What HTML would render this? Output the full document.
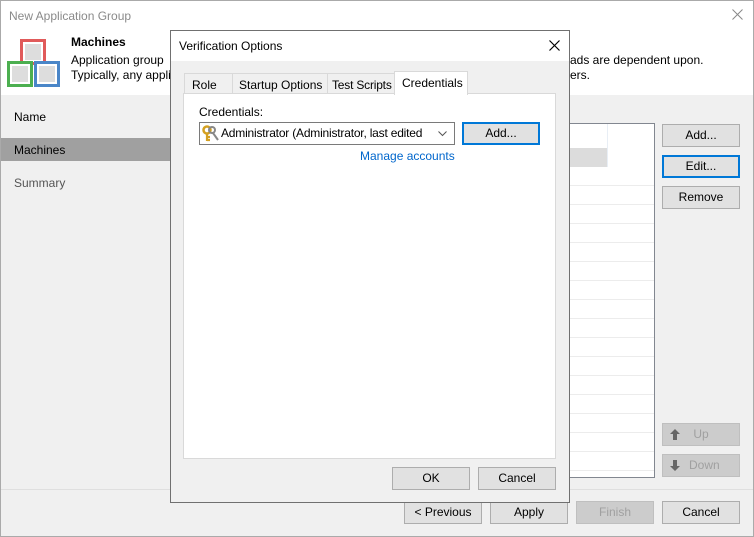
<!DOCTYPE html>
<html><head><style>
*{margin:0;padding:0;box-sizing:border-box}
body{width:754px;height:537px;overflow:hidden;font-family:"Liberation Sans",sans-serif;font-size:12px;color:#000;background:#f0f0f0;position:relative;white-space:nowrap}
.a{position:absolute}
.btn{position:absolute;background:#e1e1e1;border:1px solid #adadad;text-align:center;line-height:20px;font-size:12px}
.dis{background:#cccccc;border-color:#bfbfbf;color:#a0a0a0}
.foc{border:2px solid #0078d7;line-height:18px}
</style></head><body>
<div class="a" style="left:0;top:0;width:754px;height:537px;border:1px solid #aaa"></div>
<div class="a" style="left:1px;top:1px;width:752px;height:94px;background:#fff"></div>
<div class="a" style="left:9px;top:9px;color:#8a8a8a;font-size:12px">New Application Group</div>
<svg class="a" style="left:732px;top:9px" width="11" height="11"><path d="M0.5 0.5L10.5 10.5M10.5 0.5L0.5 10.5" stroke="#888" stroke-width="1"/></svg>
<div class="a" style="left:20px;top:39px;width:26px;height:26px;border:3px solid #e05a5a;background:#ddd;box-shadow:inset 0 0 0 2px #fff"></div>
<div class="a" style="left:7px;top:61px;width:26px;height:26px;border:3px solid #4caf50;background:#ddd;box-shadow:inset 0 0 0 2px #fff"></div>
<div class="a" style="left:34px;top:61px;width:26px;height:26px;border:3px solid #4a86c8;background:#ddd;box-shadow:inset 0 0 0 2px #fff"></div>
<div class="a" style="left:71px;top:35px;font-weight:bold">Machines</div>
<div class="a" style="left:71px;top:53px">Application group</div>
<div class="a" style="left:71px;top:68px">Typically, any appli</div>
<div class="a" style="left:570px;top:53px">ads are dependent upon.</div>
<div class="a" style="left:570px;top:68px">ers.</div>
<div class="a" style="left:14px;top:110px">Name</div>
<div class="a" style="left:1px;top:138px;width:169px;height:23px;background:#a0a0a0"></div>
<div class="a" style="left:14px;top:143px">Machines</div>
<div class="a" style="left:14px;top:176px;color:#555">Summary</div>
<!-- list -->
<div class="a" style="left:560px;top:123px;width:95px;height:355px;background:#fff;border:1px solid #828790;overflow:hidden">
<div class="a" style="left:0;top:24px;width:46px;height:19px;background:#dcdcdc"></div>
<div class="a" style="left:46px;top:0;width:1px;height:355px;background:#e8eef5"></div>
<div style="position:absolute;left:0;top:43px;width:95px;height:320px;background:repeating-linear-gradient(#fff 0 18px,#ececec 18px 19px)"></div>
</div>
<div class="btn" style="left:662px;top:124px;width:78px;height:23px">Add...</div>
<div class="btn foc" style="left:662px;top:155px;width:78px;height:23px">Edit...</div>
<div class="btn" style="left:662px;top:186px;width:78px;height:23px">Remove</div>
<div class="btn dis" style="left:662px;top:423px;width:78px;height:23px"><svg class="a" style="left:7px;top:5px" width="10" height="11"><path d="M5 0L10 5H7V11H3V5H0Z" fill="#666"/></svg>Up</div>
<div class="btn dis" style="left:662px;top:454px;width:78px;height:23px"><svg class="a" style="left:7px;top:5px" width="10" height="11"><path d="M5 11L10 6H7V0H3V6H0Z" fill="#666"/></svg>&nbsp;&nbsp;Down</div>
<div class="a" style="left:1px;top:489px;width:752px;height:1px;background:#dfdfdf"></div>
<div class="btn" style="left:404px;top:501px;width:78px;height:23px">&lt; Previous</div>
<div class="btn" style="left:490px;top:501px;width:78px;height:23px">Apply</div>
<div class="btn dis" style="left:576px;top:501px;width:78px;height:23px">Finish</div>
<div class="btn" style="left:662px;top:501px;width:78px;height:23px">Cancel</div>
<!-- dialog -->
<div class="a" style="left:170px;top:30px;width:400px;height:473px;background:#f0f0f0;border:1px solid #707070">
<div class="a" style="left:0;top:0;width:398px;height:30px;background:#fff"></div>
<div class="a" style="left:8px;top:8px">Verification Options</div>
<svg class="a" style="left:378px;top:9px" width="11" height="11"><path d="M0.5 0.5L10.5 10.5M10.5 0.5L0.5 10.5" stroke="#000" stroke-width="1.2"/></svg>
<div class="a" style="left:12px;top:62px;width:373px;height:366px;background:#fff;border:1px solid #d9d9d9"></div>
<div class="a" style="left:13px;top:42px;width:49px;height:21px;border:1px solid #d9d9d9;padding:4px 0 0 7px">Role</div>
<div class="a" style="left:61px;top:42px;width:96px;height:21px;border:1px solid #d9d9d9;padding:4px 0 0 6px">Startup Options</div>
<div class="a" style="left:156px;top:42px;width:68px;height:21px;border:1px solid #d9d9d9;padding:4px 0 0 4px;letter-spacing:-0.2px">Test Scripts</div>
<div class="a" style="left:223px;top:40px;width:74px;height:24px;border:1px solid #d9d9d9;border-bottom:none;background:#fff;padding:4px 0 0 7px">Credentials</div>
<div class="a" style="left:28px;top:74px">Credentials:</div>
<div class="a" style="left:28px;top:91px;width:256px;height:23px;border:1px solid #7a7a7a;background:#fff">
<svg class="a" style="left:2px;top:2px" width="18" height="18"><circle cx="5" cy="5" r="3.5" fill="none" stroke="#d4a020" stroke-width="2.5"/><path d="M5 8V16M5 12H8M5 15H8" stroke="#d4a020" stroke-width="2.2"/><circle cx="10" cy="5" r="3" fill="none" stroke="#888" stroke-width="2"/><path d="M11 8L16 15" stroke="#888" stroke-width="2"/></svg>
<span class="a" style="left:21px;top:3px;letter-spacing:-0.2px">Administrator (Administrator, last edited</span>
<svg class="a" style="left:238px;top:8px" width="9" height="6"><path d="M0.5 0.5L4.5 4.5L8.5 0.5" stroke="#555" fill="none"/></svg></div>
<div class="btn foc" style="left:291px;top:91px;width:78px;height:23px">Add...</div>
<div class="a" style="left:189px;top:118px;color:#0066cc">Manage accounts</div>
<div class="btn" style="left:221px;top:436px;width:78px;height:23px">OK</div>
<div class="btn" style="left:307px;top:436px;width:78px;height:23px">Cancel</div>
</div>
</body></html>
